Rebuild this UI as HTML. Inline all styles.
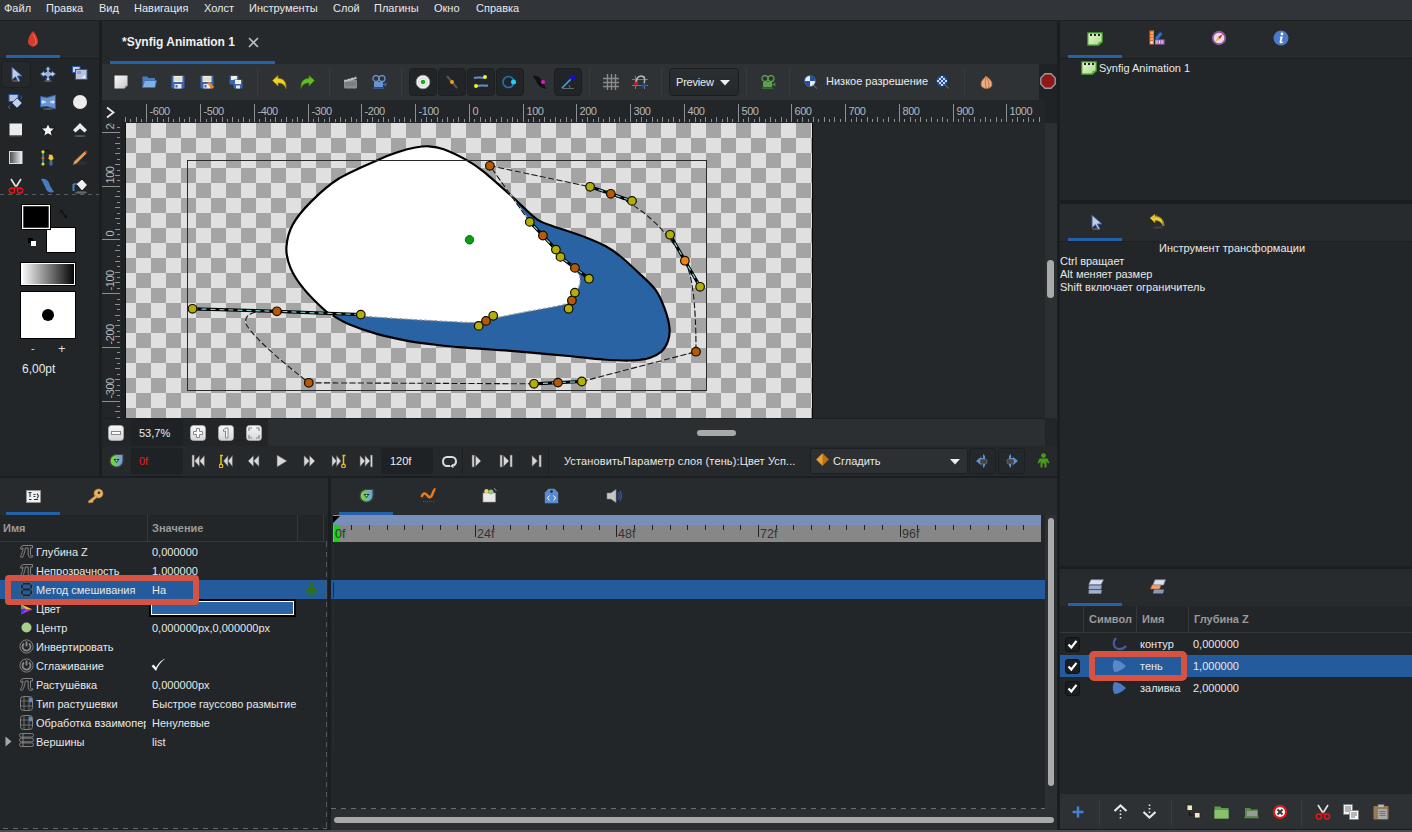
<!DOCTYPE html>
<html><head><meta charset="utf-8"><style>
*{box-sizing:border-box}
html,body{margin:0;padding:0}
body{width:1412px;height:832px;overflow:hidden;position:relative;background:#1b1e20;font-family:"Liberation Sans",sans-serif;font-size:11px;color:#e8e8e8}
.a{position:absolute}
.t{position:absolute;white-space:nowrap;line-height:13px}
.pan{position:absolute;background:#232629}
.ul{position:absolute;height:3px;background:#2561a8}
.sep{position:absolute;width:1px;background:#3b3f42}
.tg{position:absolute;width:27px;height:27px;border-radius:4px;background:#1f2225;border:1px solid #191b1d}
.hdr{font-weight:bold;color:#9b9b9b}
</style></head><body>
<div class="a" style="left:0px;top:0px;width:1412px;height:20px;background:#313539"></div>
<div class="a" style="left:0px;top:20px;width:1412px;height:1px;background:#1e2123"></div>
<div class="t" style="left:4px;top:2px;color:#e9e9e9">Файл</div>
<div class="t" style="left:46px;top:2px;color:#e9e9e9">Правка</div>
<div class="t" style="left:99px;top:2px;color:#e9e9e9">Вид</div>
<div class="t" style="left:134px;top:2px;color:#e9e9e9">Навигация</div>
<div class="t" style="left:204px;top:2px;color:#e9e9e9">Холст</div>
<div class="t" style="left:249px;top:2px;color:#e9e9e9">Инструменты</div>
<div class="t" style="left:333px;top:2px;color:#e9e9e9">Слой</div>
<div class="t" style="left:374px;top:2px;color:#e9e9e9">Плагины</div>
<div class="t" style="left:434px;top:2px;color:#e9e9e9">Окно</div>
<div class="t" style="left:476px;top:2px;color:#e9e9e9">Справка</div>
<div class="a" style="left:0px;top:21px;width:99px;height:455px;background:#232629"></div>
<div class="a" style="left:0px;top:21px;width:99px;height:37px;background:#272a2d"></div>
<div class="a" style="left:0px;top:58px;width:99px;height:1px;background:#1d2022"></div>
<div class="ul" style="left:6px;top:55px;width:54px"></div>
<svg class="a" style="left:27px;top:31px" width="12" height="16" viewBox="0 0 12 16"><path d="M6 0 C9 3 11 7 11 11 C11 14 8 15 6 16 C4 15 1 14 1 11 C1 7 3 3 6 0Z" fill="#d63a2a"/><path d="M6 3 C8 6 9 9 9 11 C9 13 7 14 6 14" fill="none" stroke="#f07060" stroke-width="1"/></svg>
<div class="a" style="left:1px;top:61px;width:30px;height:27px;background:#26292c;border:1px solid #1c1f21;border-radius:4px"></div>
<svg class="a" style="left:8px;top:66px" width="16" height="16" viewBox="0 0 16 16"><ellipse cx="8" cy="15" rx="4" ry="1" fill="#555"/><path d="M4 1L14 10H9.5L12 15L10 15.8L7.5 10.8L4 14Z" fill="#c3cbe0" stroke="#2c5aa0" stroke-width="1"/></svg>
<svg class="a" style="left:40px;top:66px" width="16" height="16" viewBox="0 0 16 16"><ellipse cx="8" cy="15" rx="4" ry="1" fill="#555"/><path d="M8 0.5L10.5 3.5H9V6.5H12V5L15.5 8L12 11V9.5H9V12.5H10.5L8 15.5L5.5 12.5H7V9.5H4V11L0.5 8L4 5V6.5H7V3.5H5.5Z" fill="#c3cbe0" stroke="#2c5aa0" stroke-width="0.8"/><circle cx="8" cy="8" r="2.5" fill="#9fb0d8"/></svg>
<svg class="a" style="left:72px;top:66px" width="16" height="16" viewBox="0 0 16 16"><rect x="0.5" y="0.5" width="7.5" height="6" fill="#c8d0e6" stroke="#2c5aa0"/><rect x="3.5" y="3.5" width="11.5" height="10" fill="#b8c3e0" stroke="#2c5aa0"/><rect x="5" y="5" width="4" height="3" fill="#8fa0cc"/><path d="M10 12L13 9V12Z" fill="#fff"/></svg>
<svg class="a" style="left:8px;top:94px" width="16" height="16" viewBox="0 0 16 16"><rect x="1" y="0.5" width="9" height="7" fill="#b8c3e0" stroke="#2c5aa0"/><path d="M4 9L9 4L14 9L9 14Z" fill="#c8d0e6" stroke="#2c5aa0"/><path d="M12 1.5L14 3.5L12 5.5M2 11L0.5 13L2 15" fill="none" stroke="#3a6ab0" stroke-width="1"/></svg>
<svg class="a" style="left:40px;top:94px" width="16" height="16" viewBox="0 0 16 16"><ellipse cx="8" cy="15" rx="5" ry="1" fill="#555"/><path d="M0.5 2.5L7 3.5L15.5 1V15L7 12.5L0.5 13Z" fill="#6b93cc" stroke="#2c5aa0"/><path d="M2 8H6M3.5 6.5L2 8L3.5 9.5M14 8H10M12.5 6.5L14 8L12.5 9.5" stroke="#cfe3ff" stroke-width="1.3" fill="none"/></svg>
<svg class="a" style="left:72px;top:94px" width="16" height="16" viewBox="0 0 16 16"><circle cx="8" cy="8" r="7" fill="#ececec"/></svg>
<svg class="a" style="left:8px;top:122px" width="16" height="16" viewBox="0 0 16 16"><rect x="1.5" y="1.5" width="12.5" height="12" fill="#ececec"/><rect x="1.5" y="13.5" width="12.5" height="1" fill="#555"/></svg>
<svg class="a" style="left:40px;top:122px" width="16" height="16" viewBox="0 0 16 16"><path d="M8 1L10 5.8L15 6.2L11.2 9.5L12.4 14.5L8 11.8L3.6 14.5L4.8 9.5L1 6.2L6 5.8Z" fill="#f2f2f2" stroke="#111" stroke-width="1"/></svg>
<svg class="a" style="left:72px;top:122px" width="16" height="16" viewBox="0 0 16 16"><path d="M1 8L8 1L15 8L12.5 10.5L8 6.5L3.5 10.5Z" fill="#ececec"/><ellipse cx="8" cy="14" rx="6" ry="0.8" fill="#666"/></svg>
<svg class="a" style="left:8px;top:150px" width="16" height="16" viewBox="0 0 16 16"><defs><linearGradient id="gr1" x1="0" x2="1"><stop offset="0" stop-color="#4a4a4a"/><stop offset="1" stop-color="#f4f4f4"/></linearGradient></defs><rect x="1.5" y="1.5" width="12.5" height="12" fill="url(#gr1)" stroke="#ddd" stroke-width="1"/></svg>
<svg class="a" style="left:40px;top:150px" width="16" height="16" viewBox="0 0 16 16"><path d="M2 15L3 3C5 -0.5 9 0 10 3" fill="none" stroke="#111" stroke-width="1"/><path d="M3 2V14" stroke="#30c8d8" stroke-width="1.2"/><circle cx="3" cy="1.8" r="1.6" fill="#e0e020"/><circle cx="3" cy="8" r="1.6" fill="#d06020"/><circle cx="3" cy="14" r="1.6" fill="#e0e020"/><path d="M9 4L12.5 4.5L14 8.5L11 11.5L8 8.5Z" fill="#f0c840" stroke="#222" stroke-width="0.8"/><rect x="9.5" y="11" width="3" height="4.5" fill="#3c6cb8"/></svg>
<svg class="a" style="left:72px;top:150px" width="16" height="16" viewBox="0 0 16 16"><ellipse cx="9" cy="13" rx="6" ry="2" fill="#2c2f31"/><path d="M1 15L2 11.5L12.5 1.5L14.5 3.5L4.5 13.5Z" fill="#e0a060" stroke="#6a4a20" stroke-width="0.6"/><path d="M12.5 1.5L14 0.5L15.5 2L14.5 3.5Z" fill="#e02020"/></svg>
<svg class="a" style="left:8px;top:178px" width="16" height="16" viewBox="0 0 16 16"><path d="M3 1L8 9M13 1L8 9" stroke="#e8e8e8" stroke-width="1.6"/><circle cx="4" cy="12.5" r="2.6" fill="none" stroke="#e01818" stroke-width="1.5"/><circle cx="12" cy="12.5" r="2.6" fill="none" stroke="#e01818" stroke-width="1.5"/><path d="M6 11L8 9L10 11" stroke="#e01818" stroke-width="1.3" fill="none"/></svg>
<svg class="a" style="left:40px;top:178px" width="16" height="16" viewBox="0 0 16 16"><path d="M1 1C5 0 8 2 9 5C10 8 12 11 14 14C10 15 7 14 6 11C5 8 3 5 1 1Z" fill="#4a7ac0"/></svg>
<svg class="a" style="left:72px;top:178px" width="16" height="16" viewBox="0 0 16 16"><ellipse cx="9" cy="14.5" rx="6" ry="1.3" fill="#666"/><path d="M4 6L10 1L15.5 7L10 13Z" fill="#f0f0f0" stroke="#111" stroke-width="1"/><path d="M1.5 6V13" stroke="#5080c0" stroke-width="2"/><path d="M1.5 6H5" stroke="#5080c0" stroke-width="1.5"/></svg>
<div class="a" style="left:0px;top:194px;width:99px;height:1px;background:repeating-linear-gradient(90deg,#5a5e61 0 4px,transparent 4px 8px)"></div>
<div class="a" style="left:46px;top:227px;width:30px;height:26px;background:#fff;border:1.5px solid #000"></div>
<div class="a" style="left:21px;top:204px;width:30px;height:26px;background:#000;border:1px solid #000;box-shadow:inset 0 0 0 1.3px #fff"></div>
<svg class="a" style="left:59px;top:209px" width="9" height="10" viewBox="0 0 9 10"><path d="M1.5 1.5L7.5 8.5" stroke="#111" stroke-width="1.3"/><path d="M1 1L4.5 1.5L1.5 4.5Z M8 9L4.5 8.5L7.5 5.5Z" fill="#111"/></svg>
<div class="a" style="left:28px;top:238px;width:5px;height:5px;background:#000"></div>
<div class="a" style="left:31px;top:241px;width:5px;height:5px;background:#fff"></div>
<div class="a" style="left:20px;top:262px;width:56px;height:24px;border:1px solid #000;box-shadow:inset 0 0 0 1px #fff;background:linear-gradient(90deg,#fff,#000)"></div>
<div class="a" style="left:20px;top:291px;width:56px;height:48px;background:#fff;border:1px solid #000"></div>
<div class="a" style="left:42px;top:309px;width:12px;height:12px;border-radius:50%;background:#000"></div>
<div class="t" style="left:31px;top:342px;color:#ddd">-</div>
<div class="t" style="left:58px;top:342px;color:#ddd;font-size:13px">+</div>
<div class="t" style="left:22px;top:363px;color:#e8e8e8;font-size:12px">6,00pt</div>
<div class="a" style="left:102px;top:21px;width:955px;height:455px;background:#202326"></div>
<div class="a" style="left:102px;top:21px;width:955px;height:43px;background:#25292c"></div>
<div class="t" style="left:122px;top:36px;font-weight:bold;font-size:12px;color:#f0f0f0">*Synfig Animation 1</div>
<svg class="a" style="left:248px;top:37px" width="11" height="11" viewBox="0 0 11 11"><path d="M1 1L10 10M10 1L1 10" stroke="#bdbdbd" stroke-width="1.6"/></svg>
<div class="ul" style="left:110px;top:61px;width:165px"></div>
<div class="a" style="left:102px;top:64px;width:937px;height:36px;background:#2e3235"></div>
<svg class="a" style="left:114px;top:75px" width="14" height="14" viewBox="0 0 14 14"><defs><linearGradient id="nd" x1="0" y1="0" x2="1" y2="1"><stop offset="0" stop-color="#fafafa"/><stop offset="1" stop-color="#c8c8c8"/></linearGradient></defs><path d="M0.5 0.5H13.5V10.5L10.5 13.5H0.5Z" fill="url(#nd)"/><path d="M10.5 13.5L11 11L13.5 10.5" fill="#888"/></svg>
<svg class="a" style="left:142px;top:75px" width="15" height="14" viewBox="0 0 15 14"><path d="M0.5 1.5H5L6.5 3H13V12.5H0.5Z" fill="#4a7cc0"/><path d="M0.5 12.5L2.5 5.5H14.5L13 12.5Z" fill="#7fb0e8" stroke="#3a6ab0" stroke-width="0.8"/></svg>
<svg class="a" style="left:171px;top:75px" width="14" height="14" viewBox="0 0 14 14"><rect x="0.5" y="0.5" width="13" height="13" rx="1" fill="#3c64b0"/><rect x="2.5" y="1" width="9" height="6" fill="#f0f0e0"/><path d="M3 3H11M3 5H11" stroke="#c8c090" stroke-width="0.6"/><rect x="3.5" y="9" width="7" height="4.5" fill="#e8e8f0"/><rect x="4.5" y="10" width="2" height="2.5" fill="#3c64b0"/></svg>
<svg class="a" style="left:200px;top:75px" width="14" height="14" viewBox="0 0 14 14"><rect x="0.5" y="0.5" width="13" height="13" rx="1" fill="#3c64b0"/><rect x="2.5" y="1" width="9" height="6" fill="#f0f0e0"/><path d="M3 3H11M3 5H11" stroke="#c8c090" stroke-width="0.6"/><rect x="3.5" y="9" width="7" height="4.5" fill="#e8e8f0"/><rect x="4.5" y="10" width="2" height="2.5" fill="#3c64b0"/><path d="M7 8L10 7L14 12L12 14Z" fill="#f08020"/></svg>
<svg class="a" style="left:229px;top:75px" width="14" height="14" viewBox="0 0 14 14"><rect x="0.5" y="0.5" width="9" height="9" rx="1" fill="#3c64b0"/><rect x="2" y="1" width="6" height="4" fill="#f0f0e0"/><rect x="4.5" y="4.5" width="9" height="9" rx="1" fill="#3c64b0"/><rect x="6" y="5" width="6" height="4" fill="#f0f0e0"/><rect x="7" y="10.5" width="4" height="3" fill="#e8e8f0"/></svg>
<div class="a" style="left:257px;top:68px;width:1px;height:28px;background:#373b3e"></div>
<div class="a" style="left:329px;top:68px;width:1px;height:28px;background:#373b3e"></div>
<div class="a" style="left:401px;top:68px;width:1px;height:28px;background:#373b3e"></div>
<div class="a" style="left:589px;top:68px;width:1px;height:28px;background:#373b3e"></div>
<div class="a" style="left:661px;top:68px;width:1px;height:28px;background:#373b3e"></div>
<div class="a" style="left:746px;top:68px;width:1px;height:28px;background:#373b3e"></div>
<div class="a" style="left:789px;top:68px;width:1px;height:28px;background:#373b3e"></div>
<div class="a" style="left:964px;top:68px;width:1px;height:28px;background:#373b3e"></div>
<svg class="a" style="left:272px;top:75px" width="15" height="14" viewBox="0 0 15 14"><g><path d="M0.5 5.5L6 0.5V3.5C11 3.5 14.5 6 14 13.5C12.5 9.5 10 8 6 8V11Z" fill="#f0d020" stroke="#a08810" stroke-width="0.7"/></g></svg>
<svg class="a" style="left:300px;top:75px" width="15" height="14" viewBox="0 0 15 14"><g transform="translate(15 0) scale(-1 1)"><path d="M0.5 5.5L6 0.5V3.5C11 3.5 14.5 6 14 13.5C12.5 9.5 10 8 6 8V11Z" fill="#60c020" stroke="#3a8010" stroke-width="0.7"/></g></svg>
<svg class="a" style="left:343px;top:75px" width="15" height="14" viewBox="0 0 15 14"><rect x="1" y="5" width="13" height="8.5" rx="1" fill="#8a8d90"/><path d="M1 5L13 1.5L13.8 4L1.5 7Z" fill="#bfc2c4"/><path d="M3 4.5L5 3.5M6.5 3.5L8.5 2.5M10 2.5L12 1.8" stroke="#333" stroke-width="1"/><path d="M2 8H13M2 10H13" stroke="#5a5d60" stroke-width="0.6"/></svg>
<svg class="a" style="left:372px;top:75px" width="15" height="14" viewBox="0 0 15 14"><circle cx="4" cy="3.5" r="3" fill="none" stroke="#6b93d0" stroke-width="1.3"/><circle cx="10" cy="3.5" r="3" fill="none" stroke="#6b93d0" stroke-width="1.3"/><rect x="2" y="7" width="9" height="5" fill="#6b93d0"/><path d="M11 9L14.5 7.5V11.5L11 10Z" fill="#3a64a8"/><rect x="1" y="12.5" width="11" height="1.2" fill="#3a64a8"/></svg>
<div class="a" style="left:409px;top:68px;width:28px;height:28px;background:#222528;border:1px solid #1c1f21;border-radius:4px"></div>
<div class="a" style="left:438px;top:68px;width:28px;height:28px;background:#222528;border:1px solid #1c1f21;border-radius:4px"></div>
<div class="a" style="left:467px;top:68px;width:28px;height:28px;background:#222528;border:1px solid #1c1f21;border-radius:4px"></div>
<div class="a" style="left:496px;top:68px;width:28px;height:28px;background:#222528;border:1px solid #1c1f21;border-radius:4px"></div>
<div class="a" style="left:554px;top:68px;width:28px;height:28px;background:#222528;border:1px solid #1c1f21;border-radius:4px"></div>
<svg class="a" style="left:415px;top:74px" width="16" height="16" viewBox="0 0 16 16"><circle cx="8" cy="8" r="6.8" fill="#f4f4f4" stroke="#9a9a9a" stroke-width="1"/><circle cx="8" cy="8" r="4.2" fill="none" stroke="#c8c8c8" stroke-width="0.8"/><circle cx="8" cy="8" r="2.3" fill="#10b020"/></svg>
<svg class="a" style="left:444px;top:74px" width="16" height="16" viewBox="0 0 16 16"><path d="M3 2L13 14" stroke="#555" stroke-width="2"/><circle cx="8" cy="8" r="2" fill="#f0a010"/></svg>
<svg class="a" style="left:473px;top:74px" width="16" height="16" viewBox="0 0 16 16"><path d="M1 4C4 3 8 4 12 3.5M4 12C7 11 11 12 15 11.5" stroke="#6090c8" stroke-width="2" fill="none"/><circle cx="12" cy="3" r="2" fill="#f0f020"/><circle cx="3" cy="12" r="2" fill="#f0f020"/></svg>
<svg class="a" style="left:502px;top:74px" width="16" height="16" viewBox="0 0 16 16"><circle cx="6.5" cy="8" r="5.5" fill="none" stroke="#2a6cb0" stroke-width="1.6"/><circle cx="11.5" cy="8" r="2.5" fill="#20d0f0"/></svg>
<svg class="a" style="left:532px;top:74px" width="16" height="16" viewBox="0 0 16 16"><path d="M1 2C5 1 9 4 10 7C12 10 13 13 14 15C10 14 6 12 5 9C4 6 2 4 1 2Z" fill="#111"/><circle cx="11" cy="8" r="2" fill="#f010d0"/></svg>
<svg class="a" style="left:560px;top:74px" width="16" height="16" viewBox="0 0 16 16"><path d="M2 14L12 4" stroke="#40a8e8" stroke-width="1.6"/><path d="M2 14.5H14M9 11L10 14" stroke="#777" stroke-width="0.8"/><circle cx="12.5" cy="3.5" r="2.6" fill="#1010d0"/></svg>
<svg class="a" style="left:603px;top:74px" width="16" height="16" viewBox="0 0 16 16"><path d="M4.5 0V16M8.5 0V16M12.5 0V16M0 4.5H16M0 8.5H16M0 12.5H16" stroke="#8a8a8a" stroke-width="1.4"/></svg>
<svg class="a" style="left:632px;top:74px" width="16" height="16" viewBox="0 0 16 16"><path d="M3.5 2V15M12.5 2V15M0 5.5H16M0 11.5H16" stroke="#7a7a7a" stroke-width="1"/><path d="M5 10C3 6 6 2 9 2C12 2 14 5 12 9" fill="none" stroke="#bbb" stroke-width="1.5"/><rect x="2" y="8" width="4" height="3" fill="#d01818" transform="rotate(-30 4 9.5)"/><rect x="9.5" y="10" width="4" height="3" fill="#2050b0" transform="rotate(-30 11.5 11.5)"/></svg>
<div class="a" style="left:669px;top:68px;width:70px;height:28px;background:linear-gradient(#2b2f32,#26292c);border:1px solid #1b1e20;border-radius:4px"></div>
<div class="t" style="left:676px;top:76px;color:#ececec;letter-spacing:-0.2px">Preview</div>
<svg class="a" style="left:720px;top:80px" width="10" height="6" viewBox="0 0 10 6"><path d="M0 0H10L5 5.5Z" fill="#eee"/></svg>
<svg class="a" style="left:761px;top:75px" width="15" height="14" viewBox="0 0 15 14"><circle cx="4" cy="3.5" r="3" fill="none" stroke="#5aa050" stroke-width="1.3"/><circle cx="10" cy="3.5" r="3" fill="none" stroke="#5aa050" stroke-width="1.3"/><rect x="2" y="7" width="9" height="5" fill="#5aa050"/><path d="M11 9L14.5 7.5V11.5L11 10Z" fill="#3a8030"/><rect x="1" y="12.5" width="11" height="1.2" fill="#3a8030"/></svg>
<svg class="a" style="left:804px;top:75px" width="14" height="14" viewBox="0 0 14 14"><circle cx="6" cy="6" r="5.5" fill="#e8eef8" stroke="#2450a0" stroke-width="0.6"/><path d="M6 0.5A5.5 5.5 0 0 1 11.5 6H6ZM6 6V11.5A5.5 5.5 0 0 1 0.5 6Z" fill="#2450a0"/><path d="M9 10L13 13.5" stroke="#777" stroke-width="1"/></svg>
<div class="t" style="left:826px;top:75px;color:#ececec">Низкое разрешение</div>
<svg class="a" style="left:936px;top:75px" width="14" height="14" viewBox="0 0 14 14"><circle cx="6" cy="6" r="5.5" fill="#2450a0"/><path d="M3 3H5V5H3ZM7 3H9V5H7ZM5 5H7V7H5ZM3 7H5V9H3ZM7 7H9V9H7ZM5 9H7V11H5ZM1 5H3V7H1ZM9 5H11V7H9ZM5 1H7V3H5Z" fill="#c8d8f0"/><path d="M9 10L13 13.5" stroke="#777" stroke-width="1"/></svg>
<svg class="a" style="left:979px;top:75px" width="15" height="14" viewBox="0 0 15 14"><path d="M7 1C9 3 13 5 13 9C13 12.5 10 13.5 7.5 13.5C4.5 13.5 2 12 2 9C2 5.5 5 4 7 1Z" fill="#e8b088" stroke="#b86830" stroke-width="0.8"/><path d="M7 2C6 6 6 10 7.5 13.5M7.5 2.5C10 6 10.5 10 9.5 13" stroke="#c07040" stroke-width="0.9" fill="none"/></svg>
<svg class="a" style="left:1040px;top:73px" width="16" height="16" viewBox="0 0 16 16"><path d="M5 0.8H11L15.2 5V11L11 15.2H5L0.8 11V5Z" fill="#901818" stroke="#9a9a9a" stroke-width="1.4"/></svg>
<svg class="a" style="left:102px;top:100px" width="943" height="23" viewBox="102 100 943 23">
<rect x="102" y="100" width="943" height="23" fill="#232629"/>
<path d="M125.5 117V122 M130.5 119V122 M136.5 117V122 M141.5 119V122 M146.5 104V122 M152.5 119V122 M157.5 117V122 M163.5 119V122 M168.5 117V122 M173.5 119V122 M179.5 117V122 M184.5 119V122 M189.5 117V122 M195.5 119V122 M200.5 104V122 M206.5 119V122 M211.5 117V122 M216.5 119V122 M222.5 117V122 M227.5 119V122 M232.5 117V122 M238.5 119V122 M243.5 117V122 M249.5 119V122 M254.5 104V122 M259.5 119V122 M265.5 117V122 M270.5 119V122 M275.5 117V122 M281.5 119V122 M286.5 117V122 M292.5 119V122 M297.5 117V122 M302.5 119V122 M308.5 104V122 M313.5 119V122 M318.5 117V122 M324.5 119V122 M329.5 117V122 M335.5 119V122 M340.5 117V122 M345.5 119V122 M351.5 117V122 M356.5 119V122 M361.5 104V122 M367.5 119V122 M372.5 117V122 M378.5 119V122 M383.5 117V122 M388.5 119V122 M394.5 117V122 M399.5 119V122 M404.5 117V122 M410.5 119V122 M415.5 104V122 M421.5 119V122 M426.5 117V122 M431.5 119V122 M437.5 117V122 M442.5 119V122 M447.5 117V122 M453.5 119V122 M458.5 117V122 M464.5 119V122 M469.5 104V122 M474.5 119V122 M480.5 117V122 M485.5 119V122 M490.5 117V122 M496.5 119V122 M501.5 117V122 M507.5 119V122 M512.5 117V122 M517.5 119V122 M523.5 104V122 M528.5 119V122 M533.5 117V122 M539.5 119V122 M544.5 117V122 M550.5 119V122 M555.5 117V122 M560.5 119V122 M566.5 117V122 M571.5 119V122 M576.5 104V122 M582.5 119V122 M587.5 117V122 M593.5 119V122 M598.5 117V122 M603.5 119V122 M609.5 117V122 M614.5 119V122 M619.5 117V122 M625.5 119V122 M630.5 104V122 M636.5 119V122 M641.5 117V122 M646.5 119V122 M652.5 117V122 M657.5 119V122 M662.5 117V122 M668.5 119V122 M673.5 117V122 M679.5 119V122 M684.5 104V122 M689.5 119V122 M695.5 117V122 M700.5 119V122 M705.5 117V122 M711.5 119V122 M716.5 117V122 M722.5 119V122 M727.5 117V122 M732.5 119V122 M738.5 104V122 M743.5 119V122 M748.5 117V122 M754.5 119V122 M759.5 117V122 M765.5 119V122 M770.5 117V122 M775.5 119V122 M781.5 117V122 M786.5 119V122 M791.5 104V122 M797.5 119V122 M802.5 117V122 M808.5 119V122 M813.5 117V122 M818.5 119V122 M824.5 117V122 M829.5 119V122 M834.5 117V122 M840.5 119V122 M845.5 104V122 M851.5 119V122 M856.5 117V122 M861.5 119V122 M867.5 117V122 M872.5 119V122 M877.5 117V122 M883.5 119V122 M888.5 117V122 M894.5 119V122 M899.5 104V122 M904.5 119V122 M910.5 117V122 M915.5 119V122 M920.5 117V122 M926.5 119V122 M931.5 117V122 M937.5 119V122 M942.5 117V122 M947.5 119V122 M953.5 104V122 M958.5 119V122 M963.5 117V122 M969.5 119V122 M974.5 117V122 M980.5 119V122 M985.5 117V122 M990.5 119V122 M996.5 117V122 M1001.5 119V122 M1006.5 104V122 M1012.5 119V122 M1017.5 117V122 M1023.5 119V122 M1028.5 117V122 M1033.5 119V122 M1039.5 117V122" stroke="#8d9196" stroke-width="1"/>
<text x="149.5" y="114.6" font-family="Liberation Sans" font-size="11" letter-spacing="-0.45" fill="#b4b8bc">-600</text>
<text x="203.5" y="114.6" font-family="Liberation Sans" font-size="11" letter-spacing="-0.45" fill="#b4b8bc">-500</text>
<text x="257.5" y="114.6" font-family="Liberation Sans" font-size="11" letter-spacing="-0.45" fill="#b4b8bc">-400</text>
<text x="311.5" y="114.6" font-family="Liberation Sans" font-size="11" letter-spacing="-0.45" fill="#b4b8bc">-300</text>
<text x="364.5" y="114.6" font-family="Liberation Sans" font-size="11" letter-spacing="-0.45" fill="#b4b8bc">-200</text>
<text x="418.5" y="114.6" font-family="Liberation Sans" font-size="11" letter-spacing="-0.45" fill="#b4b8bc">-100</text>
<text x="472.5" y="114.6" font-family="Liberation Sans" font-size="11" letter-spacing="-0.45" fill="#b4b8bc">0</text>
<text x="526.5" y="114.6" font-family="Liberation Sans" font-size="11" letter-spacing="-0.45" fill="#b4b8bc">100</text>
<text x="579.5" y="114.6" font-family="Liberation Sans" font-size="11" letter-spacing="-0.45" fill="#b4b8bc">200</text>
<text x="633.5" y="114.6" font-family="Liberation Sans" font-size="11" letter-spacing="-0.45" fill="#b4b8bc">300</text>
<text x="687.5" y="114.6" font-family="Liberation Sans" font-size="11" letter-spacing="-0.45" fill="#b4b8bc">400</text>
<text x="741.5" y="114.6" font-family="Liberation Sans" font-size="11" letter-spacing="-0.45" fill="#b4b8bc">500</text>
<text x="794.5" y="114.6" font-family="Liberation Sans" font-size="11" letter-spacing="-0.45" fill="#b4b8bc">600</text>
<text x="848.5" y="114.6" font-family="Liberation Sans" font-size="11" letter-spacing="-0.45" fill="#b4b8bc">700</text>
<text x="902.5" y="114.6" font-family="Liberation Sans" font-size="11" letter-spacing="-0.45" fill="#b4b8bc">800</text>
<text x="956.5" y="114.6" font-family="Liberation Sans" font-size="11" letter-spacing="-0.45" fill="#b4b8bc">900</text>
<text x="1009.5" y="114.6" font-family="Liberation Sans" font-size="11" letter-spacing="-0.45" fill="#b4b8bc">1000</text>
<path d="M107 107.5L113.5 112.5L107 117.5" fill="none" stroke="#e8e8e8" stroke-width="1.8"/>
</svg>
<svg class="a" style="left:102px;top:123px" width="19" height="295" viewBox="102 123 19 295">
<rect x="102" y="123" width="19" height="295" fill="#232629"/>
<path d="M117 127.5H120 M102 132.5H120 M117 137.5H120 M115 143.5H120 M117 148.5H120 M115 153.5H120 M117 159.5H120 M115 164.5H120 M117 170.5H120 M115 175.5H120 M117 180.5H120 M102 186.5H120 M117 191.5H120 M115 196.5H120 M117 202.5H120 M115 207.5H120 M117 213.5H120 M115 218.5H120 M117 223.5H120 M115 229.5H120 M117 234.5H120 M102 239.5H120 M117 245.5H120 M115 250.5H120 M117 256.5H120 M115 261.5H120 M117 266.5H120 M115 272.5H120 M117 277.5H120 M115 282.5H120 M117 288.5H120 M102 293.5H120 M117 299.5H120 M115 304.5H120 M117 309.5H120 M115 315.5H120 M117 320.5H120 M115 325.5H120 M117 331.5H120 M115 336.5H120 M117 342.5H120 M102 347.5H120 M117 352.5H120 M115 358.5H120 M117 363.5H120 M115 368.5H120 M117 374.5H120 M115 379.5H120 M117 385.5H120 M115 390.5H120 M117 395.5H120 M102 401.5H120 M117 406.5H120 M115 411.5H120 M117 417.5H120" stroke="#8d9196" stroke-width="1"/>
<text transform="translate(113.5 398.5) rotate(-90)" font-family="Liberation Sans" font-size="11" letter-spacing="-0.45" fill="#b4b8bc">-300</text>
<text transform="translate(113.5 344.5) rotate(-90)" font-family="Liberation Sans" font-size="11" letter-spacing="-0.45" fill="#b4b8bc">-200</text>
<text transform="translate(113.5 290.5) rotate(-90)" font-family="Liberation Sans" font-size="11" letter-spacing="-0.45" fill="#b4b8bc">-100</text>
<text transform="translate(113.5 236.5) rotate(-90)" font-family="Liberation Sans" font-size="11" letter-spacing="-0.45" fill="#b4b8bc">0</text>
<text transform="translate(113.5 183.5) rotate(-90)" font-family="Liberation Sans" font-size="11" letter-spacing="-0.45" fill="#b4b8bc">100</text>
<text transform="translate(113.5 129.5) rotate(-90)" font-family="Liberation Sans" font-size="11" letter-spacing="-0.45" fill="#b4b8bc">200</text>
</svg>
<div class="a" style="left:121px;top:123px;width:924px;height:295px;background:#24282b"></div>
<svg width="686" height="295" viewBox="126 123 686 295" style="position:absolute;left:126px;top:123px">
<defs><pattern id="chk" x="1" y="3" width="30" height="30" patternUnits="userSpaceOnUse"><rect width="30" height="30" fill="#a4a4a4"/><rect width="15" height="15" fill="#e0e0e0"/><rect x="15" y="15" width="15" height="15" fill="#e0e0e0"/></pattern></defs>
<rect x="126" y="123" width="686" height="295" fill="url(#chk)" shape-rendering="crispEdges"/>
<path d="M511.0 195.5 C513.2 197.6 519.4 203.8 524.0 207.9 C528.6 212.1 533.7 217.4 538.5 220.4 C543.3 223.4 548.1 224.4 552.9 226.2 C557.7 228.0 561.7 229.1 567.3 231.0 C572.9 232.9 580.1 235.1 586.5 237.7 C592.9 240.2 600.2 243.2 605.8 246.3 C611.4 249.4 614.8 251.8 620.0 256.0 C625.2 260.2 631.1 265.7 637.0 271.3 C642.9 276.9 650.7 283.5 655.3 289.6 C659.9 295.7 662.0 301.5 664.4 307.9 C666.8 314.3 668.9 322.5 669.5 328.0 C670.1 333.5 669.3 337.1 668.0 341.0 C666.7 344.9 664.6 348.7 661.5 351.5 C658.4 354.3 654.8 356.5 649.5 358.0 C644.2 359.5 637.8 360.2 630.0 360.5 C622.2 360.8 613.2 360.2 603.0 359.5 C592.8 358.8 582.4 357.3 568.5 356.0 C554.6 354.7 532.8 352.7 519.7 351.6 C506.6 350.5 499.7 350.2 490.0 349.5 C480.3 348.8 471.1 348.2 461.6 347.4 C452.2 346.6 442.7 345.7 433.3 344.5 C423.9 343.3 414.4 342.1 405.0 340.3 C395.6 338.5 386.1 336.6 376.7 333.9 C367.2 331.2 355.6 327.1 348.3 324.0 C341.0 320.9 335.3 316.9 332.7 315.5 C514.1 199.8 522.0 211.8 529.7 221.0 C537.4 230.2 549.1 242.3 557.0 250.8 C564.9 259.3 573.2 267.3 577.0 272.0 C580.8 276.7 579.7 276.5 580.0 279.0 C580.3 281.5 580.0 283.7 578.8 287.0 C577.6 290.3 575.5 295.8 573.0 298.7 C570.5 301.6 572.4 302.1 564.0 304.4 C555.6 306.7 534.0 310.2 522.8 312.4 C511.6 314.6 504.5 316.0 497.0 317.6 C489.5 319.2 486.2 321.7 478.0 322.3 C469.8 322.9 459.7 321.9 447.5 321.4 C435.3 320.8 419.2 319.9 405.0 319.0 C390.8 318.1 374.6 317.0 362.5 316.2 C350.4 315.4 337.7 314.4 332.7 314.0 Z" fill="#2a63a4"/>
<path d="M332.7 314.0 C331.6 313.6 330.9 315.6 326.0 311.3 C321.1 307.0 309.3 295.6 303.4 288.4 C297.5 281.2 293.3 274.8 290.5 267.9 C287.7 261.0 286.0 254.5 286.4 247.3 C286.8 240.1 288.7 232.1 292.8 224.5 C296.9 216.9 303.5 209.2 311.1 201.6 C318.7 194.0 327.4 185.8 338.5 178.8 C349.6 171.9 367.9 164.4 377.9 159.9 C387.9 155.4 392.1 154.1 398.3 152.0 C404.5 149.9 410.2 148.4 415.3 147.5 C420.4 146.6 424.2 146.0 428.9 146.3 C433.6 146.6 437.5 146.9 443.7 149.2 C449.9 151.5 459.7 156.2 466.3 159.9 C472.9 163.6 475.9 165.4 483.3 171.3 C490.8 177.2 506.4 191.5 511.0 195.5 C514.1 199.8 522.0 211.8 529.7 221.0 C537.4 230.2 549.1 242.3 557.0 250.8 C564.9 259.3 573.2 267.3 577.0 272.0 C580.8 276.7 579.7 276.5 580.0 279.0 C580.3 281.5 580.0 283.7 578.8 287.0 C577.6 290.3 575.5 295.8 573.0 298.7 C570.5 301.6 572.4 302.1 564.0 304.4 C555.6 306.7 534.0 310.2 522.8 312.4 C511.6 314.6 504.5 316.0 497.0 317.6 C489.5 319.2 486.2 321.7 478.0 322.3 C469.8 322.9 459.7 321.9 447.5 321.4 C435.3 320.8 419.2 319.9 405.0 319.0 C390.8 318.1 374.6 317.0 362.5 316.2 C350.4 315.4 337.7 314.4 332.7 314.0 Z" fill="#ffffff"/>
<path d="M332.7 314.0 C331.6 313.6 330.9 315.6 326.0 311.3 C321.1 307.0 309.3 295.6 303.4 288.4 C297.5 281.2 293.3 274.8 290.5 267.9 C287.7 261.0 286.0 254.5 286.4 247.3 C286.8 240.1 288.7 232.1 292.8 224.5 C296.9 216.9 303.5 209.2 311.1 201.6 C318.7 194.0 327.4 185.8 338.5 178.8 C349.6 171.9 367.9 164.4 377.9 159.9 C387.9 155.4 392.1 154.1 398.3 152.0 C404.5 149.9 410.2 148.4 415.3 147.5 C420.4 146.6 424.2 146.0 428.9 146.3 C433.6 146.6 437.5 146.9 443.7 149.2 C449.9 151.5 459.7 156.2 466.3 159.9 C472.9 163.6 475.9 165.4 483.3 171.3 C490.8 177.2 506.4 191.5 511.0 195.5 C513.2 197.6 519.4 203.8 524.0 207.9 C528.6 212.1 533.7 217.4 538.5 220.4 C543.3 223.4 548.1 224.4 552.9 226.2 C557.7 228.0 561.7 229.1 567.3 231.0 C572.9 232.9 580.1 235.1 586.5 237.7 C592.9 240.2 600.2 243.2 605.8 246.3 C611.4 249.4 614.8 251.8 620.0 256.0 C625.2 260.2 631.1 265.7 637.0 271.3 C642.9 276.9 650.7 283.5 655.3 289.6 C659.9 295.7 662.0 301.5 664.4 307.9 C666.8 314.3 668.9 322.5 669.5 328.0 C670.1 333.5 669.3 337.1 668.0 341.0 C666.7 344.9 664.6 348.7 661.5 351.5 C658.4 354.3 654.8 356.5 649.5 358.0 C644.2 359.5 637.8 360.2 630.0 360.5 C622.2 360.8 613.2 360.2 603.0 359.5 C592.8 358.8 582.4 357.3 568.5 356.0 C554.6 354.7 532.8 352.7 519.7 351.6 C506.6 350.5 499.7 350.2 490.0 349.5 C480.3 348.8 471.1 348.2 461.6 347.4 C452.2 346.6 442.7 345.7 433.3 344.5 C423.9 343.3 414.4 342.1 405.0 340.3 C395.6 338.5 386.1 336.6 376.7 333.9 C367.2 331.2 355.6 327.1 348.3 324.0 C341.0 320.9 335.3 316.9 332.7 315.5" fill="none" stroke="#000" stroke-width="2.2" stroke-linejoin="round"/>
<path d="M511.0 195.5 C514.1 199.8 522.0 211.8 529.7 221.0 C537.4 230.2 549.1 242.3 557.0 250.8 C564.9 259.3 573.2 267.3 577.0 272.0 C580.8 276.7 579.7 276.5 580.0 279.0 C580.3 281.5 580.0 283.7 578.8 287.0 C577.6 290.3 575.5 295.8 573.0 298.7 C570.5 301.6 572.4 302.1 564.0 304.4 C555.6 306.7 534.0 310.2 522.8 312.4 C511.6 314.6 504.5 316.0 497.0 317.6 C489.5 319.2 486.2 321.7 478.0 322.3 C469.8 322.9 459.7 321.9 447.5 321.4 C435.3 320.8 419.2 319.9 405.0 319.0 C390.8 318.1 374.6 317.0 362.5 316.2 C350.4 315.4 337.7 314.4 332.7 314.0" fill="none" stroke="#9a9a9a" stroke-width="1.2" stroke-dasharray="3 2"/>
<rect x="187.5" y="160.5" width="519" height="230" fill="none" stroke="#2a2a2a" stroke-width="1"/>
<path d="M489.9 165.8 L590.1 186.8 M610.8 193.8 C640 205 665 228 684.9 260.7 C692 275 696 300 696 351.7 L581.8 381.5 M534 383.8 L308.8 382.8 C290 368 255 340 246 324 C244 316 250 312 262 311.5 M529.8 221.9 L489.9 165.8" fill="none" stroke="#c4c4c4" stroke-width="1.1"/>
<path d="M489.9 165.8 L590.1 186.8 M610.8 193.8 C640 205 665 228 684.9 260.7 C692 275 696 300 696 351.7 L581.8 381.5 M534 383.8 L308.8 382.8 C290 368 255 340 246 324 C244 316 250 312 262 311.5 M529.8 221.9 L489.9 165.8" fill="none" stroke="#161616" stroke-width="1.1" stroke-dasharray="6 2.5"/>
<path d="M192.5 308.8 L276.9 311.3 L360.8 314.6" fill="none" stroke="#000" stroke-width="3.2"/>
<path d="M192.5 308.8 L276.9 311.3 L360.8 314.6" fill="none" stroke="#7fd0d4" stroke-width="1.2" stroke-dasharray="5 4"/>
<path d="M478.7 325.9 L486.0 320.9 L493.2 315.8" fill="none" stroke="#000" stroke-width="3.2"/>
<path d="M478.7 325.9 L486.0 320.9 L493.2 315.8" fill="none" stroke="#7fd0d4" stroke-width="1.2" stroke-dasharray="5 4"/>
<path d="M568.6 308.8 L571.9 300.5 L574.9 292.6" fill="none" stroke="#000" stroke-width="3.2"/>
<path d="M568.6 308.8 L571.9 300.5 L574.9 292.6" fill="none" stroke="#7fd0d4" stroke-width="1.2" stroke-dasharray="5 4"/>
<path d="M589.0 278.7 L574.9 267.9 L560.5 256.9" fill="none" stroke="#000" stroke-width="3.2"/>
<path d="M589.0 278.7 L574.9 267.9 L560.5 256.9" fill="none" stroke="#7fd0d4" stroke-width="1.2" stroke-dasharray="5 4"/>
<path d="M555.9 249.6 L542.9 235.5 L529.8 221.9" fill="none" stroke="#000" stroke-width="3.2"/>
<path d="M555.9 249.6 L542.9 235.5 L529.8 221.9" fill="none" stroke="#7fd0d4" stroke-width="1.2" stroke-dasharray="5 4"/>
<path d="M590.1 186.8 L610.8 193.8 L632.0 200.9" fill="none" stroke="#000" stroke-width="3.2"/>
<path d="M590.1 186.8 L610.8 193.8 L632.0 200.9" fill="none" stroke="#7fd0d4" stroke-width="1.2" stroke-dasharray="5 4"/>
<path d="M670.1 234.8 L684.9 260.7 L700.1 286.8" fill="none" stroke="#000" stroke-width="3.2"/>
<path d="M670.1 234.8 L684.9 260.7 L700.1 286.8" fill="none" stroke="#7fd0d4" stroke-width="1.2" stroke-dasharray="5 4"/>
<path d="M534.0 383.8 L558.0 382.6 L581.8 381.5" fill="none" stroke="#000" stroke-width="3.2"/>
<path d="M534.0 383.8 L558.0 382.6 L581.8 381.5" fill="none" stroke="#7fd0d4" stroke-width="1.2" stroke-dasharray="5 4"/>
<circle cx="192.5" cy="308.8" r="4.3" fill="#b3ae08" stroke="#0e0e00" stroke-width="1.2"/>
<circle cx="276.9" cy="311.3" r="4.3" fill="#b95806" stroke="#0e0e00" stroke-width="1.2"/>
<circle cx="360.8" cy="314.6" r="4.3" fill="#b3ae08" stroke="#0e0e00" stroke-width="1.2"/>
<circle cx="478.7" cy="325.9" r="4.3" fill="#b3ae08" stroke="#0e0e00" stroke-width="1.2"/>
<circle cx="486.0" cy="320.9" r="4.3" fill="#b95806" stroke="#0e0e00" stroke-width="1.2"/>
<circle cx="493.2" cy="315.8" r="4.3" fill="#b3ae08" stroke="#0e0e00" stroke-width="1.2"/>
<circle cx="568.6" cy="308.8" r="4.3" fill="#b3ae08" stroke="#0e0e00" stroke-width="1.2"/>
<circle cx="571.9" cy="300.5" r="4.3" fill="#b95806" stroke="#0e0e00" stroke-width="1.2"/>
<circle cx="574.9" cy="292.6" r="4.3" fill="#b3ae08" stroke="#0e0e00" stroke-width="1.2"/>
<circle cx="589.0" cy="278.7" r="4.3" fill="#b3ae08" stroke="#0e0e00" stroke-width="1.2"/>
<circle cx="574.9" cy="267.9" r="4.3" fill="#b95806" stroke="#0e0e00" stroke-width="1.2"/>
<circle cx="560.5" cy="256.9" r="4.3" fill="#b3ae08" stroke="#0e0e00" stroke-width="1.2"/>
<circle cx="555.9" cy="249.6" r="4.3" fill="#b3ae08" stroke="#0e0e00" stroke-width="1.2"/>
<circle cx="542.9" cy="235.5" r="4.3" fill="#b95806" stroke="#0e0e00" stroke-width="1.2"/>
<circle cx="529.8" cy="221.9" r="4.3" fill="#b3ae08" stroke="#0e0e00" stroke-width="1.2"/>
<circle cx="590.1" cy="186.8" r="4.3" fill="#b3ae08" stroke="#0e0e00" stroke-width="1.2"/>
<circle cx="610.8" cy="193.8" r="4.3" fill="#b95806" stroke="#0e0e00" stroke-width="1.2"/>
<circle cx="632.0" cy="200.9" r="4.3" fill="#b3ae08" stroke="#0e0e00" stroke-width="1.2"/>
<circle cx="670.1" cy="234.8" r="4.3" fill="#b3ae08" stroke="#0e0e00" stroke-width="1.2"/>
<circle cx="684.9" cy="260.7" r="4.3" fill="#f57f10" stroke="#0e0e00" stroke-width="1.2"/>
<circle cx="700.1" cy="286.8" r="4.3" fill="#b3ae08" stroke="#0e0e00" stroke-width="1.2"/>
<circle cx="534.0" cy="383.8" r="4.3" fill="#b3ae08" stroke="#0e0e00" stroke-width="1.2"/>
<circle cx="558.0" cy="382.6" r="4.3" fill="#b95806" stroke="#0e0e00" stroke-width="1.2"/>
<circle cx="581.8" cy="381.5" r="4.3" fill="#b3ae08" stroke="#0e0e00" stroke-width="1.2"/>
<circle cx="489.9" cy="165.8" r="4.3" fill="#b95806" stroke="#0e0e00" stroke-width="1.2"/>
<circle cx="696.0" cy="351.7" r="4.3" fill="#b95806" stroke="#0e0e00" stroke-width="1.2"/>
<circle cx="308.8" cy="382.8" r="4.3" fill="#b95806" stroke="#0e0e00" stroke-width="1.2"/>
<circle cx="469.5" cy="239.8" r="4.2" fill="#0aa00a" stroke="#063" stroke-width="1"/>
</svg>
<div class="a" style="left:812px;top:123px;width:1px;height:295px;background:#050505"></div>
<div class="a" style="left:121px;top:123px;width:4px;height:295px;background:#1f2225"></div>
<div class="a" style="left:125px;top:123px;width:1px;height:295px;background:#101214"></div>
<div class="a" style="left:1045px;top:123px;width:12px;height:295px;background:#2c3033"></div>
<div class="a" style="left:1047px;top:260px;width:7px;height:38px;background:#a9abab;border-radius:4px"></div>
<div class="a" style="left:102px;top:418px;width:955px;height:28px;background:#232629"></div>
<div class="a" style="left:268px;top:418px;width:777px;height:28px;background:#2b2f32"></div>
<div class="a" style="left:102px;top:418px;width:943px;height:1px;background:#1d2023"></div>
<div class="a" style="left:131px;top:419px;width:52px;height:27px;background:#1f2225;border-radius:3px"></div>
<svg class="a" style="left:108px;top:425px" width="16" height="16" viewBox="0 0 16 16"><defs><linearGradient id="zbminus" x1="0" y1="0" x2="0" y2="1"><stop offset="0" stop-color="#f8f8f8"/><stop offset="1" stop-color="#d6d6d6"/></linearGradient></defs><rect x="0.5" y="0.5" width="15" height="15" rx="3" fill="url(#zbminus)" stroke="#bbb" stroke-width="0.6"/><rect x="3.5" y="6.5" width="9" height="3" fill="#fafafa" stroke="#888" stroke-width="1"/></svg>
<svg class="a" style="left:190px;top:425px" width="16" height="16" viewBox="0 0 16 16"><defs><linearGradient id="zbplus" x1="0" y1="0" x2="0" y2="1"><stop offset="0" stop-color="#f8f8f8"/><stop offset="1" stop-color="#d6d6d6"/></linearGradient></defs><rect x="0.5" y="0.5" width="15" height="15" rx="3" fill="url(#zbplus)" stroke="#bbb" stroke-width="0.6"/><path d="M6.5 3.5H9.5V6.5H12.5V9.5H9.5V12.5H6.5V9.5H3.5V6.5H6.5Z" fill="#fafafa" stroke="#888" stroke-width="1"/></svg>
<svg class="a" style="left:218px;top:425px" width="16" height="16" viewBox="0 0 16 16"><defs><linearGradient id="zbone" x1="0" y1="0" x2="0" y2="1"><stop offset="0" stop-color="#f8f8f8"/><stop offset="1" stop-color="#d6d6d6"/></linearGradient></defs><rect x="0.5" y="0.5" width="15" height="15" rx="3" fill="url(#zbone)" stroke="#bbb" stroke-width="0.6"/><path d="M5.5 4.5L8 3H10V13H7.5V6L5.5 6.5Z" fill="#fafafa" stroke="#888" stroke-width="1"/></svg>
<svg class="a" style="left:246px;top:425px" width="16" height="16" viewBox="0 0 16 16"><defs><linearGradient id="zbfit" x1="0" y1="0" x2="0" y2="1"><stop offset="0" stop-color="#f8f8f8"/><stop offset="1" stop-color="#d6d6d6"/></linearGradient></defs><rect x="0.5" y="0.5" width="15" height="15" rx="3" fill="url(#zbfit)" stroke="#bbb" stroke-width="0.6"/><path d="M3 6V3H6M10 3H13V6M13 10V13H10M6 13H3V10" fill="none" stroke="#888" stroke-width="1.2"/></svg>
<div class="t" style="left:139px;top:427px;color:#eee">53,7%</div>
<div class="a" style="left:697px;top:430px;width:39px;height:6px;background:#a8a9a9;border-radius:3px"></div>
<div class="a" style="left:102px;top:446px;width:955px;height:30px;background:#25292b"></div>
<div class="a" style="left:131px;top:448px;width:52px;height:26px;background:#1f2225;border-radius:3px"></div>
<svg class="a" style="left:109px;top:453px" width="15" height="15" viewBox="0 0 15 15"><defs><linearGradient id="kfl" x1="0" y1="0.5" x2="1" y2="0.5"><stop offset="0.1" stop-color="#70e028"/><stop offset="0.9" stop-color="#6aa0e8"/></linearGradient></defs><path d="M7.5 1.5H14V8C14 11.5 11 14 7.5 14C4 14 1 11.5 1 8C1 4 4 1.5 7.5 1.5Z" fill="url(#kfl)" stroke="#444" stroke-width="1.2"/><path d="M4.5 6H10.5L7.5 10Z" fill="#222"/><circle cx="7.5" cy="7.5" r="1" fill="#ddd"/></svg>
<svg class="a" style="left:191px;top:454px" width="15" height="14" viewBox="0 0 15 14"><rect x="1" y="1" width="2.2" height="12" fill="#d9d9d9" stroke="#555" stroke-width="0.6"/><path d="M3.5 7L8.5 1.5V12.5Z" fill="#d9d9d9" stroke="#555" stroke-width="0.6"/><path d="M8.5 7L13.5 1.5V12.5Z" fill="#d9d9d9" stroke="#555" stroke-width="0.6"/></svg>
<svg class="a" style="left:219px;top:454px" width="15" height="14" viewBox="0 0 15 14"><path d="M2 1V11" stroke="#e8c020" stroke-width="1.5"/><circle cx="2" cy="12" r="1.8" fill="none" stroke="#e8c020" stroke-width="1.2"/><path d="M1 1.5H4" stroke="#e8c020" stroke-width="1.5"/><path d="M4.5 7L9 1.5V12.5Z" fill="#d9d9d9" stroke="#555" stroke-width="0.6"/><path d="M9 7L13.5 1.5V12.5Z" fill="#d9d9d9" stroke="#555" stroke-width="0.6"/></svg>
<svg class="a" style="left:247px;top:454px" width="15" height="14" viewBox="0 0 15 14"><path d="M1 7L6.5 1.5V12.5Z" fill="#d9d9d9" stroke="#555" stroke-width="0.6"/><path d="M6.5 7L12 1.5V12.5Z" fill="#d9d9d9" stroke="#555" stroke-width="0.6"/></svg>
<svg class="a" style="left:276px;top:454px" width="15" height="14" viewBox="0 0 15 14"><path d="M1 1L11 7L1 13Z" fill="#d9d9d9" stroke="#555" stroke-width="0.6"/></svg>
<svg class="a" style="left:303px;top:454px" width="15" height="14" viewBox="0 0 15 14"><path d="M1 1.5L6.5 7L1 12.5Z" fill="#d9d9d9" stroke="#555" stroke-width="0.6"/><path d="M6.5 1.5L12 7L6.5 12.5Z" fill="#d9d9d9" stroke="#555" stroke-width="0.6"/></svg>
<svg class="a" style="left:331px;top:454px" width="15" height="14" viewBox="0 0 15 14"><path d="M1 1.5L5.5 7L1 12.5Z" fill="#d9d9d9" stroke="#555" stroke-width="0.6"/><path d="M5.5 1.5L10 7L5.5 12.5Z" fill="#d9d9d9" stroke="#555" stroke-width="0.6"/><path d="M12.5 1V11" stroke="#e8c020" stroke-width="1.5"/><circle cx="12.5" cy="12" r="1.8" fill="none" stroke="#e8c020" stroke-width="1.2"/><path d="M11.5 1.5H14.5" stroke="#e8c020" stroke-width="1.5"/></svg>
<svg class="a" style="left:359px;top:454px" width="15" height="14" viewBox="0 0 15 14"><path d="M1 1.5L6 7L1 12.5Z" fill="#d9d9d9" stroke="#555" stroke-width="0.6"/><path d="M6 1.5L11 7L6 12.5Z" fill="#d9d9d9" stroke="#555" stroke-width="0.6"/><rect x="11.3" y="1" width="2.2" height="12" fill="#d9d9d9" stroke="#555" stroke-width="0.6"/></svg>
<svg class="a" style="left:442px;top:454px" width="15" height="14" viewBox="0 0 15 14"><path d="M8 12H5C2.8 12 1 10.2 1 7.5C1 4.8 2.8 3 5 3H10C12.2 3 14 4.8 14 7.5C14 9.5 12.8 11 11.2 11.7" fill="none" stroke="#dcdcdc" stroke-width="2"/><path d="M11.5 9.5L8 12.2L11.5 14Z" fill="#dcdcdc"/></svg>
<svg class="a" style="left:471px;top:454px" width="15" height="14" viewBox="0 0 15 14"><rect x="1" y="1" width="2.2" height="12" fill="#d9d9d9" stroke="#555" stroke-width="0.6"/><path d="M4.5 1.5L10 7L4.5 12.5Z" fill="#d9d9d9" stroke="#555" stroke-width="0.6"/></svg>
<svg class="a" style="left:499px;top:454px" width="15" height="14" viewBox="0 0 15 14"><rect x="1" y="1" width="2.2" height="12" fill="#d9d9d9" stroke="#555" stroke-width="0.6"/><path d="M4.5 1.5L10 7L4.5 12.5Z" fill="#d9d9d9" stroke="#555" stroke-width="0.6"/><rect x="11" y="1" width="2.2" height="12" fill="#d9d9d9" stroke="#555" stroke-width="0.6"/></svg>
<svg class="a" style="left:531px;top:454px" width="15" height="14" viewBox="0 0 15 14"><path d="M1 1.5L6.5 7L1 12.5Z" fill="#d9d9d9" stroke="#555" stroke-width="0.6"/><rect x="8" y="1" width="2.2" height="12" fill="#d9d9d9" stroke="#555" stroke-width="0.6"/></svg>
<div class="a" style="left:462px;top:448px;width:1px;height:26px;background:#1d2022"></div>
<div class="a" style="left:548px;top:448px;width:1px;height:26px;background:#1d2022"></div>
<div class="t" style="left:139px;top:455px;color:#e02020">0f</div>
<div class="a" style="left:381px;top:448px;width:52px;height:26px;background:#1f2225;border-radius:3px"></div>
<div class="t" style="left:390px;top:455px;color:#eee">120f</div>
<div class="t" style="left:564px;top:455px;color:#e8e8e8;letter-spacing:0.12px">УстановитьПараметр слоя (тень):Цвет Усп...</div>
<div class="a" style="left:810px;top:448px;width:158px;height:26px;background:#2c3033;border:1px solid #1d2022;border-radius:3px"></div>
<div class="t" style="left:833px;top:455px;color:#e8e8e8">Сгладить</div>
<svg class="a" style="left:815px;top:452px" width="15" height="15" viewBox="0 0 15 15"><path d="M7.5 0.8L14.2 7.5L7.5 14.2L0.8 7.5Z" fill="#c07010" stroke="#333" stroke-width="0.8"/><path d="M7.5 1.5L1.5 7.5L7.5 13.5Z" fill="#e8a030"/></svg>
<svg class="a" style="left:950px;top:459px" width="10" height="6" viewBox="0 0 10 6"><path d="M0 0H10L5 5.5Z" fill="#f0f0f0"/></svg>
<div class="a" style="left:969px;top:448px;width:27px;height:26px;background:#25282b;border:1px solid #1d2022;border-radius:3px"></div>
<div class="a" style="left:998px;top:448px;width:27px;height:26px;background:#25282b;border:1px solid #1d2022;border-radius:3px"></div>
<svg class="a" style="left:975px;top:453px" width="16" height="16" viewBox="0 0 16 16"><path d="M8 1L10 3V13L8 15V11H5.5L7 13L1 8L7 3L5.5 5H8Z" fill="#5a90d8"/><rect x="5" y="6" width="7" height="5" rx="1.5" fill="#444" stroke="#888" stroke-width="0.5"/></svg>
<svg class="a" style="left:1003px;top:453px" width="16" height="16" viewBox="0 0 16 16"><path d="M8 1L6 3V13L8 15V11H10.5L9 13L15 8L9 3L10.5 5H8Z" fill="#5a90d8"/><rect x="4" y="6" width="7" height="5" rx="1.5" fill="#444" stroke="#888" stroke-width="0.5"/></svg>
<svg class="a" style="left:1037px;top:453px" width="13" height="15" viewBox="0 0 13 15"><circle cx="6.5" cy="2.6" r="2.4" fill="#4a9a1a"/><path d="M2.5 5.5H10.5L12.5 10L11 10.5L9.5 8V14.5H7.5V10.5H5.5V14.5H3.5V8L2 10.5L0.5 10Z" fill="#4a9a1a"/></svg>
<div class="a" style="left:1060px;top:21px;width:352px;height:179px;background:#232629"></div>
<div class="a" style="left:1060px;top:21px;width:352px;height:37px;background:#272a2d"></div>
<div class="a" style="left:1060px;top:58px;width:352px;height:1px;background:#1d2022"></div>
<div class="ul" style="left:1068px;top:55px;width:54px"></div>
<svg class="a" style="left:1087px;top:32px" width="16" height="14" viewBox="0 0 16 14"><defs><linearGradient id="cb1" x1="0" y1="0" x2="1" y2="1"><stop offset="0" stop-color="#e8f8d8"/><stop offset="1" stop-color="#a8d888"/></linearGradient></defs><path d="M0.8 0.8H15.2V10L11.5 13.2H0.8Z" fill="url(#cb1)" stroke="#3a9a20" stroke-width="1.2"/><path d="M3 3H5M7 3H9M11 3H13" stroke="#222" stroke-width="1.8"/><path d="M11 13L12 10.5L15 10" fill="none" stroke="#3a9a20" stroke-width="0.8"/></svg>
<svg class="a" style="left:1149px;top:30px" width="16" height="16" viewBox="0 0 16 16"><rect x="0.5" y="0.5" width="4.5" height="14" fill="#f07020"/><path d="M1.5 3H4M1.5 6H4M1.5 9H4" stroke="#fff" stroke-width="0.8"/><rect x="6" y="9.5" width="9.5" height="5" fill="#b070c0"/><path d="M8 10.5V13.5M10.5 10.5V13.5M13 10.5V13.5" stroke="#fff" stroke-width="0.8"/><path d="M6 8L11 2L13.5 4L8.5 10Z" fill="#3070d0"/><circle cx="2.7" cy="12.5" r="1.3" fill="#fff"/></svg>
<svg class="a" style="left:1211px;top:30px" width="16" height="16" viewBox="0 0 16 16"><circle cx="8" cy="8" r="7.2" fill="#8a5a9a"/><circle cx="8" cy="8" r="5.3" fill="#ecd8ec"/><path d="M12 4L9 9L7 7Z" fill="#e02020"/><path d="M4 12L7 7L9 9Z" fill="#e0c020"/></svg>
<svg class="a" style="left:1273px;top:30px" width="16" height="16" viewBox="0 0 16 16"><circle cx="8" cy="8" r="7.5" fill="#4a7ac8"/><circle cx="9" cy="4" r="1.4" fill="#fff"/><path d="M7.5 6.5H9.8L8.5 11.5C8.3 12.3 9 12.3 10 11.5L10.3 12.2C9 13.5 6 13.8 6.6 11.5L7.5 8H6.5Z" fill="#fff"/></svg>
<svg class="a" style="left:1081px;top:61px" width="16" height="14" viewBox="0 0 16 14"><defs><linearGradient id="cb1" x1="0" y1="0" x2="1" y2="1"><stop offset="0" stop-color="#e8f8d8"/><stop offset="1" stop-color="#a8d888"/></linearGradient></defs><path d="M0.8 0.8H15.2V10L11.5 13.2H0.8Z" fill="url(#cb1)" stroke="#3a9a20" stroke-width="1.2"/><path d="M3 3H5M7 3H9M11 3H13" stroke="#222" stroke-width="1.8"/><path d="M11 13L12 10.5L15 10" fill="none" stroke="#3a9a20" stroke-width="0.8"/></svg>
<div class="t" style="left:1099px;top:62px;">Synfig Animation 1</div>
<div class="a" style="left:1060px;top:204px;width:352px;height:362px;background:#232629"></div>
<div class="a" style="left:1060px;top:204px;width:352px;height:37px;background:#272b2e"></div>
<div class="a" style="left:1060px;top:241px;width:352px;height:1px;background:#1d2022"></div>
<div class="ul" style="left:1068px;top:238px;width:54px"></div>
<svg class="a" style="left:1088px;top:214px" width="16" height="16" viewBox="0 0 16 16"><ellipse cx="8" cy="15" rx="4" ry="1" fill="#555"/><path d="M4 1L14 10H9.5L12 15L10 15.8L7.5 10.8L4 14Z" fill="#c3cbe0" stroke="#2c5aa0" stroke-width="1"/></svg>
<svg class="a" style="left:1149px;top:213px" width="16" height="16" viewBox="0 0 16 16"><ellipse cx="9" cy="14.5" rx="5" ry="1" fill="#444"/><path d="M1 5L6 1V3.5C11 3 14.5 6 14 13C12.5 9 10 7.5 6 7.5V10Z" fill="#e8d040" stroke="#9a8010" stroke-width="0.7"/><path d="M4 5.5L8 2.5V4.5C12 4.5 15 7 15 13" fill="none" stroke="#c0a020" stroke-width="0.8"/></svg>
<div class="t" style="left:1159px;top:242px;">Инструмент трансформации</div>
<div class="t" style="left:1060px;top:255px;">Ctrl вращает</div>
<div class="t" style="left:1060px;top:268px;">Alt меняет размер</div>
<div class="t" style="left:1060px;top:281px;">Shift включает ограничитель</div>
<div class="a" style="left:1060px;top:569px;width:352px;height:263px;background:#232629"></div>
<div class="a" style="left:1060px;top:569px;width:352px;height:37px;background:#272b2e"></div>
<div class="ul" style="left:1068px;top:603px;width:54px"></div>
<div class="a" style="left:1060px;top:632px;width:352px;height:1px;background:#36393c"></div>
<div class="a" style="left:1083px;top:606px;width:1px;height:26px;background:#36393c"></div>
<div class="a" style="left:1136px;top:606px;width:1px;height:26px;background:#36393c"></div>
<div class="a" style="left:1188px;top:606px;width:1px;height:26px;background:#36393c"></div>
<svg class="a" style="left:1088px;top:579px" width="16" height="16" viewBox="0 0 16 16"><path d="M3 0.8H15.5L13 5.5H0.8Z" fill="#d8e0f0" stroke="#8090b0" stroke-width="0.6"/><path d="M1 6.5H13.5L13 10H0.8Z" fill="#a0b0d0" stroke="#8090b0" stroke-width="0.6"/><path d="M1 11H13.5L13 14.5H0.8Z" fill="#a0b0d0" stroke="#8090b0" stroke-width="0.6"/></svg>
<svg class="a" style="left:1150px;top:579px" width="16" height="16" viewBox="0 0 16 16"><path d="M5 0.8H15.5L13.5 6H3Z" fill="#d8e0f0" stroke="#8090b0" stroke-width="0.6"/><path d="M2 6H11L9.5 10H0.5Z" fill="#f0a070" stroke="#c06030" stroke-width="0.6"/><path d="M4 10.5H14L13 14.5H3Z" fill="#8a98b8"/></svg>
<div class="t" style="left:1089px;top:613px;font-weight:bold;color:#9b9b9b">Символ</div>
<div class="t" style="left:1142px;top:613px;font-weight:bold;color:#9b9b9b">Имя</div>
<div class="t" style="left:1194px;top:613px;font-weight:bold;color:#9b9b9b">Глубина Z</div>
<div class="a" style="left:1060px;top:655px;width:352px;height:22px;background:#245b9c"></div>
<div class="a" style="left:1065px;top:637px;width:15px;height:15px;background:#1b1d1f;border:1px solid #111;border-radius:3px"></div>
<svg class="a" style="left:1067px;top:639px" width="11" height="11" viewBox="0 0 11 11"><path d="M1.5 5.5L4.3 8.5L9.5 1.8" fill="none" stroke="#fff" stroke-width="2.2"/></svg>
<div class="t" style="left:1140px;top:638px;">контур</div>
<svg class="a" style="left:1111px;top:637px" width="16" height="14" viewBox="0 0 16 14"><path d="M5 1C1.5 5 2 11 7.5 12C10.5 12.5 13 11.5 15 9" fill="none" stroke="#4a5a98" stroke-width="2.2"/></svg>
<div class="t" style="left:1193px;top:638px;">0,000000</div>
<div class="a" style="left:1065px;top:659px;width:15px;height:15px;background:#1b1d1f;border:1px solid #111;border-radius:3px"></div>
<svg class="a" style="left:1067px;top:661px" width="11" height="11" viewBox="0 0 11 11"><path d="M1.5 5.5L4.3 8.5L9.5 1.8" fill="none" stroke="#fff" stroke-width="2.2"/></svg>
<div class="t" style="left:1140px;top:660px;">тень</div>
<svg class="a" style="left:1111px;top:659px" width="16" height="14" viewBox="0 0 16 14"><path d="M3.5 1C7 1 11 3 15 7C11 11 7 13 3.5 13C1.5 10 1 4 3.5 1Z" fill="#5a88c8"/></svg>
<div class="t" style="left:1193px;top:660px;">1,000000</div>
<div class="a" style="left:1065px;top:681px;width:15px;height:15px;background:#1b1d1f;border:1px solid #111;border-radius:3px"></div>
<svg class="a" style="left:1067px;top:683px" width="11" height="11" viewBox="0 0 11 11"><path d="M1.5 5.5L4.3 8.5L9.5 1.8" fill="none" stroke="#fff" stroke-width="2.2"/></svg>
<div class="t" style="left:1140px;top:682px;">заливка</div>
<svg class="a" style="left:1111px;top:681px" width="16" height="14" viewBox="0 0 16 14"><path d="M3.5 1C7 1 11 3 15 7C11 11 7 13 3.5 13C1.5 10 1 4 3.5 1Z" fill="#4a7ac0"/></svg>
<div class="t" style="left:1193px;top:682px;">2,000000</div>
<div class="a" style="left:1089px;top:651px;width:98px;height:30px;border:6px solid #d45342;border-radius:5px"></div>
<div class="a" style="left:1060px;top:794px;width:352px;height:36px;background:#2d3134"></div>
<div class="a" style="left:1099px;top:800px;width:1px;height:26px;background:#3a3e41"></div>
<div class="a" style="left:1171px;top:800px;width:1px;height:26px;background:#3a3e41"></div>
<div class="a" style="left:1301px;top:800px;width:1px;height:26px;background:#3a3e41"></div>
<svg class="a" style="left:1072px;top:806px" width="12" height="12" viewBox="0 0 12 12"><path d="M6 0.5V11.5M0.5 6H11.5" stroke="#4a80d0" stroke-width="2.4"/></svg>
<svg class="a" style="left:1113px;top:804px" width="15" height="15" viewBox="0 0 15 15"><path d="M1.5 7L7.5 1.5L13.5 7" fill="none" stroke="#e8e8e8" stroke-width="2.2"/><path d="M7.5 6V7.5M7.5 9.5V11M7.5 13V14.5" stroke="#e8e8e8" stroke-width="1.6"/></svg>
<svg class="a" style="left:1142px;top:804px" width="15" height="15" viewBox="0 0 15 15"><path d="M1.5 8L7.5 13.5L13.5 8" fill="none" stroke="#e8e8e8" stroke-width="2.2"/><path d="M7.5 0.5V2M7.5 4V5.5M7.5 7.5V9" stroke="#e8e8e8" stroke-width="1.6"/></svg>
<svg class="a" style="left:1186px;top:804px" width="15" height="15" viewBox="0 0 15 15"><rect x="1" y="1" width="5.5" height="5.5" fill="#f0e8c0" stroke="#222" stroke-width="0.8"/><rect x="8.5" y="8.5" width="5.5" height="5.5" fill="#f0e8c0" stroke="#222" stroke-width="0.8"/><path d="M3.5 8V11H7" fill="none" stroke="#111" stroke-width="1.2"/></svg>
<svg class="a" style="left:1214px;top:805px" width="15" height="14" viewBox="0 0 15 14"><path d="M0.5 1.5H6L7.5 3H14.5V13.5H0.5Z" fill="#5aa048"/><path d="M0.5 5H14.5V13.5H0.5Z" fill="#88c070"/></svg>
<svg class="a" style="left:1244px;top:805px" width="15" height="14" viewBox="0 0 15 14"><path d="M1 3H6L7 4.5H14V12.5H1Z" fill="#5a8a50"/><path d="M3 6H13V11H3Z" fill="#9a9a9a"/><path d="M0.5 12.5H14.5" stroke="#5a8a50" stroke-width="1.5"/></svg>
<svg class="a" style="left:1272px;top:804px" width="16" height="16" viewBox="0 0 16 16"><circle cx="8" cy="8" r="7.2" fill="#e01818"/><circle cx="8" cy="8" r="5" fill="#f4f4f4"/><path d="M5.5 5.5L10.5 10.5M10.5 5.5L5.5 10.5" stroke="#333" stroke-width="1.8"/></svg>
<svg class="a" style="left:1315px;top:804px" width="16" height="16" viewBox="0 0 16 16"><path d="M3 1L8 9M13 1L8 9" stroke="#e8e8e8" stroke-width="1.6"/><circle cx="4" cy="12.5" r="2.6" fill="none" stroke="#e01818" stroke-width="1.5"/><circle cx="12" cy="12.5" r="2.6" fill="none" stroke="#e01818" stroke-width="1.5"/><path d="M6 11L8 9L10 11" stroke="#e01818" stroke-width="1.3" fill="none"/></svg>
<svg class="a" style="left:1343px;top:804px" width="16" height="16" viewBox="0 0 16 16"><path d="M0.5 0.5H9.5V10.5H0.5Z" fill="#f0f0f0" stroke="#777" stroke-width="0.6"/><path d="M2 3H8M2 5H8M2 7H6" stroke="#555" stroke-width="0.8"/><path d="M6.5 6.5H15.5V15.5H6.5Z" fill="#f8f8f8" stroke="#777" stroke-width="0.6"/><path d="M8 9H14M8 11H14M8 13H12" stroke="#555" stroke-width="0.8"/></svg>
<svg class="a" style="left:1373px;top:804px" width="16" height="16" viewBox="0 0 16 16"><rect x="0.5" y="2" width="15" height="13.5" rx="1" fill="#9a7a50"/><rect x="5" y="0.5" width="6" height="3" fill="#bbb" stroke="#666" stroke-width="0.5"/><rect x="5" y="5" width="9" height="10" fill="#a8a8a8"/><path d="M6.5 7.5H12.5M6.5 9.5H12.5M6.5 11.5H12.5" stroke="#666" stroke-width="0.8"/></svg>
<div class="a" style="left:0px;top:830px;width:1412px;height:2px;background:#4a4d4f"></div>
<div class="a" style="left:0px;top:478px;width:328px;height:352px;background:#232629"></div>
<div class="a" style="left:0px;top:478px;width:328px;height:37px;background:#272b2e"></div>
<div class="ul" style="left:6px;top:512px;width:54px"></div>
<div class="a" style="left:0px;top:541px;width:328px;height:1px;background:#36393c"></div>
<div class="a" style="left:147px;top:515px;width:1px;height:26px;background:#36393c"></div>
<div class="a" style="left:297px;top:515px;width:1px;height:26px;background:#36393c"></div>
<div class="a" style="left:323px;top:515px;width:1px;height:26px;background:#36393c"></div>
<svg class="a" style="left:26px;top:490px" width="15" height="13" viewBox="0 0 15 13"><rect x="0.5" y="0.5" width="14" height="12" fill="#eeeeee" stroke="#999" stroke-width="0.6"/><path d="M2.5 2.5H5.5M4 2.5V7M3 9.5H5.5M7.5 4.5H9.5M7.5 6.5H9.5M11 3.5L12.5 6L11 8.5M8 9.5H12" stroke="#333" stroke-width="1.1" fill="none"/></svg>
<svg class="a" style="left:87px;top:488px" width="17" height="16" viewBox="0 0 17 16"><circle cx="11.5" cy="5.5" r="4.5" fill="#e8b060" stroke="#c08030" stroke-width="0.6"/><circle cx="12" cy="4.8" r="1.3" fill="#272b2e"/><path d="M8.5 7.5L1 13.5L2.5 15.2L4 14L5 15L6.5 13.5L5.8 12.7L7 12L10 9.5Z" fill="#e8b060" stroke="#c08030" stroke-width="0.6"/></svg>
<div class="t" style="left:3px;top:522px;font-weight:bold;color:#9b9b9b">Имя</div>
<div class="t" style="left:152px;top:522px;font-weight:bold;color:#9b9b9b">Значение</div>
<div class="a" style="left:0px;top:580px;width:327px;height:19px;background:#245b9c"></div>
<div class="t" style="left:36px;top:546px;width:110px;overflow:hidden">Глубина Z</div>
<div class="t" style="left:152px;top:546px;">0,000000</div>
<svg class="a" style="left:19px;top:544px" width="15" height="14" viewBox="0 0 15 14"><path d="M1.5 4.5C2 2 3.5 1.5 5 1.5H13.5V4H11.5V10.5C11.5 12 12.5 12 13.5 11.5L13.8 12.8C12 13.8 9.5 13.5 9.2 11V4H6.3C6 7 5 11 3.5 13.3L1.3 12.8C3 10 3.8 7 4 4C3 4 2.5 4.5 2.3 5.5Z" fill="none" stroke="#8a8a8a" stroke-width="0.9"/></svg>
<div class="t" style="left:36px;top:565px;width:110px;overflow:hidden">Непрозрачность</div>
<div class="t" style="left:152px;top:565px;">1,000000</div>
<svg class="a" style="left:19px;top:563px" width="15" height="14" viewBox="0 0 15 14"><path d="M1.5 4.5C2 2 3.5 1.5 5 1.5H13.5V4H11.5V10.5C11.5 12 12.5 12 13.5 11.5L13.8 12.8C12 13.8 9.5 13.5 9.2 11V4H6.3C6 7 5 11 3.5 13.3L1.3 12.8C3 10 3.8 7 4 4C3 4 2.5 4.5 2.3 5.5Z" fill="none" stroke="#8a8a8a" stroke-width="0.9"/></svg>
<div class="t" style="left:36px;top:584px;width:110px;overflow:hidden">Метод смешивания</div>
<div class="t" style="left:152px;top:584px;">На</div>
<svg class="a" style="left:20px;top:582px" width="13" height="15" viewBox="0 0 13 15"><path d="M3 1.5H10M3 7.5H10M3 13.5H10" stroke="#222" stroke-width="1.8"/><path d="M1.8 2.5V6.5M11.2 2.5V6.5M1.8 8.5V12.5M11.2 8.5V12.5" stroke="#222" stroke-width="1.8"/><rect x="0.5" y="0.5" width="12" height="14" rx="3" fill="none" stroke="#666" stroke-width="0.7"/></svg>
<div class="t" style="left:36px;top:603px;width:110px;overflow:hidden">Цвет</div>
<svg class="a" style="left:20px;top:604px" width="13" height="11" viewBox="0 0 13 11"><defs><linearGradient id="pc1" x1="0" y1="0" x2="1" y2="1"><stop offset="0" stop-color="#20e020"/><stop offset="0.5" stop-color="#e020e0"/><stop offset="1" stop-color="#2020f0"/></linearGradient></defs><path d="M1 0.5L12.5 5.5L1 10.5Z" fill="url(#pc1)"/><path d="M1 0.5L12.5 5.5L6 5Z" fill="#f0d020"/><path d="M1 10.5L6 5L1 5Z" fill="#2040ff"/></svg>
<div class="t" style="left:36px;top:622px;width:110px;overflow:hidden">Центр</div>
<div class="t" style="left:152px;top:622px;">0,000000px,0,000000px</div>
<svg class="a" style="left:21px;top:622px" width="11" height="11" viewBox="0 0 11 11"><circle cx="5.5" cy="5.5" r="5" fill="#a5cf8a"/></svg>
<div class="t" style="left:36px;top:641px;width:110px;overflow:hidden">Инвертировать</div>
<svg class="a" style="left:19px;top:639px" width="15" height="15" viewBox="0 0 15 15"><circle cx="7.5" cy="7.5" r="6.6" fill="none" stroke="#8a8a8a" stroke-width="0.9"/><path d="M5 4.5A4 4 0 1 0 10 4.5" fill="none" stroke="#8a8a8a" stroke-width="1.8"/><path d="M7.5 2.5V7.5" stroke="#8a8a8a" stroke-width="1.8"/></svg>
<div class="t" style="left:36px;top:660px;width:110px;overflow:hidden">Сглаживание</div>
<svg class="a" style="left:19px;top:658px" width="15" height="15" viewBox="0 0 15 15"><circle cx="7.5" cy="7.5" r="6.6" fill="none" stroke="#8a8a8a" stroke-width="0.9"/><path d="M5 4.5A4 4 0 1 0 10 4.5" fill="none" stroke="#8a8a8a" stroke-width="1.8"/><path d="M7.5 2.5V7.5" stroke="#8a8a8a" stroke-width="1.8"/></svg>
<div class="t" style="left:36px;top:679px;width:110px;overflow:hidden">Растушёвка</div>
<div class="t" style="left:152px;top:679px;">0,000000px</div>
<svg class="a" style="left:19px;top:677px" width="15" height="14" viewBox="0 0 15 14"><path d="M1.5 4.5C2 2 3.5 1.5 5 1.5H13.5V4H11.5V10.5C11.5 12 12.5 12 13.5 11.5L13.8 12.8C12 13.8 9.5 13.5 9.2 11V4H6.3C6 7 5 11 3.5 13.3L1.3 12.8C3 10 3.8 7 4 4C3 4 2.5 4.5 2.3 5.5Z" fill="none" stroke="#8a8a8a" stroke-width="0.9"/></svg>
<div class="t" style="left:36px;top:698px;width:110px;overflow:hidden">Тип растушевки</div>
<div class="t" style="left:152px;top:698px;">Быстрое гауссово размытие</div>
<svg class="a" style="left:20px;top:696px" width="13" height="15" viewBox="0 0 13 15"><rect x="0.5" y="0.5" width="12" height="14" rx="3" fill="none" stroke="#8a8a8a" stroke-width="0.9"/><path d="M1 5H12M1 10H12M4 0.5V14.5M9 0.5V14.5" stroke="#8a8a8a" stroke-width="0.7"/><rect x="9" y="1.5" width="3" height="5" rx="1.5" fill="#5a8ad8"/></svg>
<div class="t" style="left:36px;top:717px;width:110px;overflow:hidden">Обработка взаимопер</div>
<div class="t" style="left:152px;top:717px;">Ненулевые</div>
<svg class="a" style="left:20px;top:715px" width="13" height="15" viewBox="0 0 13 15"><rect x="0.5" y="0.5" width="12" height="14" rx="3" fill="none" stroke="#8a8a8a" stroke-width="0.9"/><path d="M1 5H12M1 10H12M4 0.5V14.5M9 0.5V14.5" stroke="#8a8a8a" stroke-width="0.7"/><rect x="9" y="1.5" width="3" height="5" rx="1.5" fill="#5a8ad8"/></svg>
<div class="t" style="left:36px;top:736px;width:110px;overflow:hidden">Вершины</div>
<div class="t" style="left:152px;top:736px;">list</div>
<svg class="a" style="left:19px;top:733px" width="15" height="14" viewBox="0 0 15 14"><rect x="0.5" y="0.5" width="14" height="3.6" rx="1.8" fill="none" stroke="#8a8a8a" stroke-width="0.9"/><rect x="0.5" y="5.2" width="14" height="3.6" rx="1.8" fill="none" stroke="#8a8a8a" stroke-width="0.9"/><rect x="0.5" y="9.9" width="14" height="3.6" rx="1.8" fill="none" stroke="#8a8a8a" stroke-width="0.9"/><path d="M4 0.5V13.5" stroke="#8a8a8a" stroke-width="0.9"/></svg>
<svg class="a" style="left:5px;top:736px" width="7" height="11" viewBox="0 0 7 11"><path d="M0.5 0.5L6.5 5.5L0.5 10.5Z" fill="#a8a8a8"/></svg>
<div class="a" style="left:149px;top:599px;width:147px;height:18px;background:#000"></div>
<div class="a" style="left:151px;top:601px;width:143px;height:14px;background:#2a63a4;border:1px solid #fff"></div>
<div class="a" style="left:5px;top:575px;width:194px;height:30px;border:6px solid #d45342;border-radius:4px"></div>
<svg class="a" style="left:305px;top:582px" width="13" height="15" viewBox="0 0 13 15"><circle cx="6.5" cy="2.6" r="2.4" fill="#2c7214"/><path d="M2.5 5.5H10.5L12.5 10L11 10.5L9.5 8V14.5H7.5V10.5H5.5V14.5H3.5V8L2 10.5L0.5 10Z" fill="#2c7214"/></svg>
<svg class="a" style="left:151px;top:658px" width="15" height="14" viewBox="0 0 15 14"><path d="M0.5 8L5 13C7 8 10 3.5 14.5 0.5C9.5 2.5 7 6 5 9.5L2.5 6.5Z" fill="#f4f4f4"/></svg>
<div class="a" style="left:326px;top:542px;width:1px;height:288px;background:repeating-linear-gradient(180deg,#55595d 0 5px,transparent 5px 10px)"></div>
<div class="a" style="left:0px;top:828px;width:327px;height:1px;background:repeating-linear-gradient(90deg,transparent 0 3px,#63666a 3px 8px,transparent 8px 13px);background-size:10px 1px"></div>
<div class="a" style="left:0px;top:829px;width:1412px;height:1px;background:#1a1c1e"></div>
<div class="a" style="left:331px;top:478px;width:726px;height:352px;background:#232629"></div>
<div class="a" style="left:331px;top:478px;width:726px;height:37px;background:#272b2e"></div>
<div class="ul" style="left:339px;top:512px;width:54px"></div>
<svg class="a" style="left:359px;top:488px" width="15" height="15" viewBox="0 0 15 15"><defs><linearGradient id="kfl" x1="0" y1="0.5" x2="1" y2="0.5"><stop offset="0.1" stop-color="#70e028"/><stop offset="0.9" stop-color="#6aa0e8"/></linearGradient></defs><path d="M7.5 1.5H14V8C14 11.5 11 14 7.5 14C4 14 1 11.5 1 8C1 4 4 1.5 7.5 1.5Z" fill="url(#kfl)" stroke="#444" stroke-width="1.2"/><path d="M4.5 6H10.5L7.5 10Z" fill="#222"/><circle cx="7.5" cy="7.5" r="1" fill="#ddd"/></svg>
<svg class="a" style="left:420px;top:487px" width="17" height="16" viewBox="0 0 17 16"><path d="M1.5 10C3 6 5 5.5 7 8C9 11 11 11 12.5 7C13.5 4 14.5 2 15.5 2" fill="none" stroke="#f07818" stroke-width="2.6"/><path d="M3 14.5H14" stroke="#555" stroke-width="1" stroke-dasharray="1 1"/></svg>
<svg class="a" style="left:482px;top:487px" width="16" height="16" viewBox="0 0 16 16"><rect x="1" y="6" width="12.5" height="9" fill="#e8e8e8" stroke="#999" stroke-width="0.6"/><circle cx="4.5" cy="4.2" r="2.2" fill="#e8d860"/><circle cx="9" cy="5" r="2.5" fill="#90c880"/><path d="M12 1L14.5 4" stroke="#999" stroke-width="1"/></svg>
<svg class="a" style="left:544px;top:488px" width="15" height="16" viewBox="0 0 15 16"><path d="M4.5 0.8H10.5L14.2 4.5V15.2H0.8V4.5Z" fill="#5a8ad0"/><circle cx="7.5" cy="3.6" r="1.3" fill="#25292c"/><path d="M5.5 7.5L3.5 10L5.5 12.5M9.5 7.5L11.5 10L9.5 12.5" fill="none" stroke="#fff" stroke-width="1"/></svg>
<svg class="a" style="left:606px;top:488px" width="16" height="16" viewBox="0 0 16 16"><path d="M1 5H5L10 1.5V14.5L5 11H1Z" fill="#c8c8c8" stroke="#888" stroke-width="0.6"/><path d="M12 4.5C13.5 6.5 13.5 9.5 12 11.5M13.8 3C16 5.5 16 10.5 13.8 13" fill="none" stroke="#3060b0" stroke-width="1.2"/></svg>
<div class="a" style="left:333px;top:515px;width:708px;height:10px;background:#788fb9"></div>
<div class="a" style="left:333px;top:525px;width:708px;height:17px;background:#878787"></div>
<div class="a" style="left:331px;top:580px;width:714px;height:19px;background:#245b9c"></div>
<svg class="a" style="left:331px;top:515px" width="714" height="30" viewBox="331 515 714 30"><path d="M351.5 525V530 M369.5 525V530 M387.5 525V530 M404.5 525V530 M422.5 525V530 M440.5 525V530 M457.5 525V530 M475.5 525V537 M493.5 525V530 M510.5 525V530 M528.5 525V530 M546.5 525V530 M563.5 525V530 M581.5 525V530 M599.5 525V530 M616.5 525V537 M634.5 525V530 M652.5 525V530 M670.5 525V530 M687.5 525V530 M705.5 525V530 M723.5 525V530 M740.5 525V530 M758.5 525V537 M776.5 525V530 M793.5 525V530 M811.5 525V530 M829.5 525V530 M846.5 525V530 M864.5 525V530 M882.5 525V530 M900.5 525V537 M917.5 525V530 M935.5 525V530 M953.5 525V530 M970.5 525V530 M988.5 525V530 M1006.5 525V530 M1023.5 525V530" stroke="#222" stroke-width="1"/><text x="477.0" y="538" font-family="Liberation Sans" font-size="12.5" fill="#333">24f</text><text x="618.0" y="538" font-family="Liberation Sans" font-size="12.5" fill="#333">48f</text><text x="760.0" y="538" font-family="Liberation Sans" font-size="12.5" fill="#333">72f</text><text x="902.0" y="538" font-family="Liberation Sans" font-size="12.5" fill="#333">96f</text><rect x="334" y="525" width="6" height="17" fill="#1ed01e"/><rect x="333" y="525" width="1" height="17" fill="#e0a010"/><text x="335" y="538" font-family="Liberation Sans" font-size="12.5" fill="#333">0f</text><path d="M333 516H340L333 523Z" fill="#000"/></svg>
<div class="a" style="left:333px;top:544px;width:1px;height:16px;background:#1212f0"></div>
<div class="a" style="left:333px;top:563px;width:1px;height:16px;background:#1212f0"></div>
<div class="a" style="left:333px;top:582px;width:1px;height:16px;background:#1212f0"></div>
<div class="a" style="left:333px;top:601px;width:1px;height:16px;background:#1212f0"></div>
<div class="a" style="left:333px;top:620px;width:1px;height:16px;background:#1212f0"></div>
<div class="a" style="left:333px;top:639px;width:1px;height:16px;background:#1212f0"></div>
<div class="a" style="left:333px;top:658px;width:1px;height:16px;background:#1212f0"></div>
<div class="a" style="left:333px;top:677px;width:1px;height:16px;background:#1212f0"></div>
<div class="a" style="left:333px;top:696px;width:1px;height:16px;background:#1212f0"></div>
<div class="a" style="left:333px;top:715px;width:1px;height:16px;background:#1212f0"></div>
<div class="a" style="left:333px;top:734px;width:1px;height:16px;background:#1212f0"></div>
<div class="a" style="left:1045px;top:515px;width:12px;height:294px;background:#2c3033"></div>
<div class="a" style="left:1048px;top:518px;width:6px;height:268px;background:#a9abab;border-radius:3px"></div>
<div class="a" style="left:331px;top:808px;width:714px;height:1px;background:repeating-linear-gradient(90deg,#6a6d70 0 5px,transparent 5px 10px)"></div>
<div class="a" style="left:331px;top:809px;width:726px;height:21px;background:#2b2f32"></div>
<div class="a" style="left:334px;top:817px;width:720px;height:6px;background:#a8a9a9;border-radius:3px"></div>
</body></html>
